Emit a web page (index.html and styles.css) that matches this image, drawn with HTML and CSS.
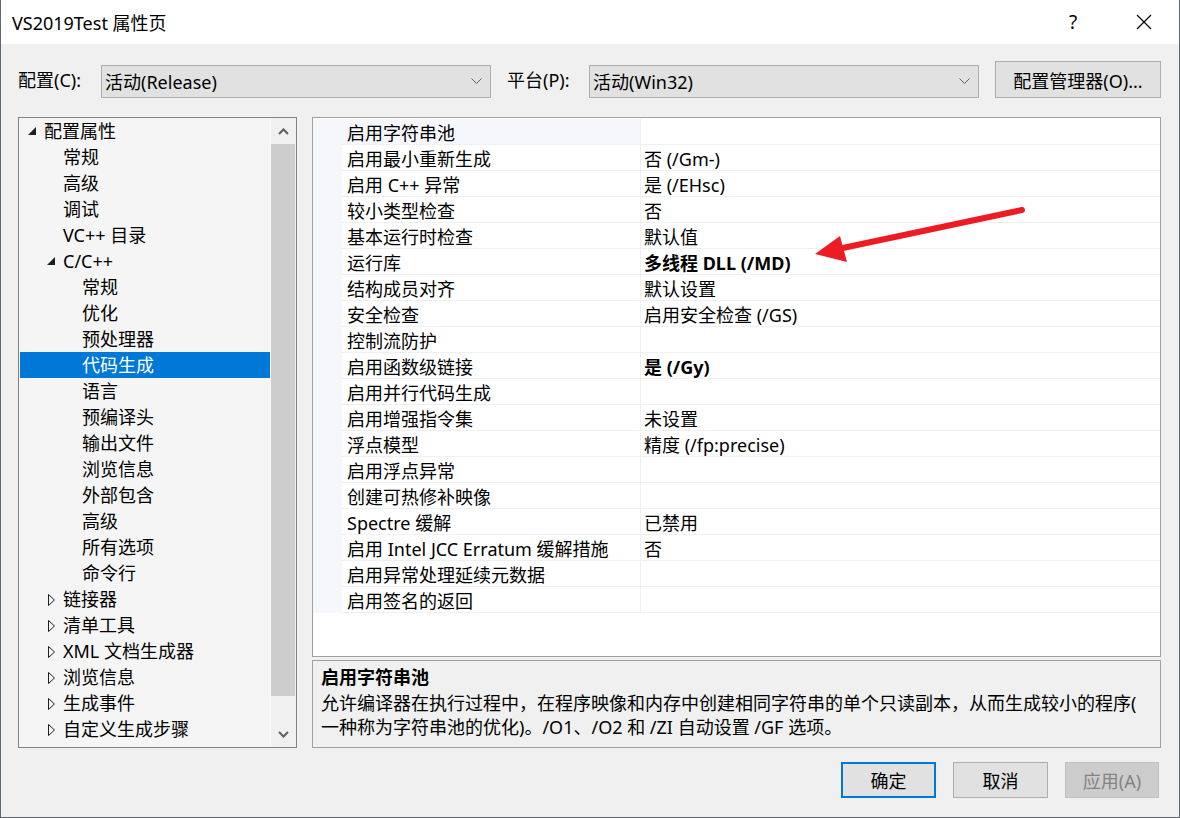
FILE: index.html
```html
<!DOCTYPE html>
<html lang="zh-CN">
<head>
  <meta charset="UTF-8" />
  <title>VS2019Test 属性页</title>
  <link rel="stylesheet" href="styles.css">
</head>
<body>
<div class="window">
  <div class="titlebar">
    <span class="title">VS2019Test 属性页</span>
    <span class="help">?</span>
    <span class="close">
      <svg width="16" height="16" viewBox="0 0 16 16"><path d="M1 1L15 15M15 1L1 15" stroke="#000" stroke-width="1.2"/></svg>
    </span>
  </div>

  <div class="content">
    <div class="config-row">
      <label class="field-label">配置(C):</label>
      <div class="combo">
        <span>活动(Release)</span>
        <svg class="chev" width="11" height="6" viewBox="0 0 11 6"><path d="M0.5 0.5L5.5 5.5L10.5 0.5" fill="none" stroke="#606060"/></svg>
      </div>
      <label class="field-label second">平台(P):</label>
      <div class="combo">
        <span>活动(Win32)</span>
        <svg class="chev" width="11" height="6" viewBox="0 0 11 6"><path d="M0.5 0.5L5.5 5.5L10.5 0.5" fill="none" stroke="#606060"/></svg>
      </div>
      <button class="btn manager">配置管理器(O)...</button>
    </div>

    <div class="main">
      <div class="tree">
        <div class="tree-rows">
          <div class="node lv0"><svg class="exp" width="8" height="8" viewBox="0 0 8 8"><polygon points="8,0 8,8 0,8" fill="#1e1e1e"/></svg>配置属性</div>
          <div class="node lv1">常规</div>
          <div class="node lv1">高级</div>
          <div class="node lv1">调试</div>
          <div class="node lv1">VC++ 目录</div>
          <div class="node lv1"><svg class="exp" width="8" height="8" viewBox="0 0 8 8"><polygon points="8,0 8,8 0,8" fill="#1e1e1e"/></svg>C/C++</div>
          <div class="node lv2">常规</div>
          <div class="node lv2">优化</div>
          <div class="node lv2">预处理器</div>
          <div class="node lv2 selected">代码生成</div>
          <div class="node lv2">语言</div>
          <div class="node lv2">预编译头</div>
          <div class="node lv2">输出文件</div>
          <div class="node lv2">浏览信息</div>
          <div class="node lv2">外部包含</div>
          <div class="node lv2">高级</div>
          <div class="node lv2">所有选项</div>
          <div class="node lv2">命令行</div>
          <div class="node lv1"><svg class="col" width="7" height="12" viewBox="0 0 7 12"><polygon points="0.5,0.5 6.5,6 0.5,11.5" fill="none" stroke="#1e1e1e"/></svg>链接器</div>
          <div class="node lv1"><svg class="col" width="7" height="12" viewBox="0 0 7 12"><polygon points="0.5,0.5 6.5,6 0.5,11.5" fill="none" stroke="#1e1e1e"/></svg>清单工具</div>
          <div class="node lv1"><svg class="col" width="7" height="12" viewBox="0 0 7 12"><polygon points="0.5,0.5 6.5,6 0.5,11.5" fill="none" stroke="#1e1e1e"/></svg>XML 文档生成器</div>
          <div class="node lv1"><svg class="col" width="7" height="12" viewBox="0 0 7 12"><polygon points="0.5,0.5 6.5,6 0.5,11.5" fill="none" stroke="#1e1e1e"/></svg>浏览信息</div>
          <div class="node lv1"><svg class="col" width="7" height="12" viewBox="0 0 7 12"><polygon points="0.5,0.5 6.5,6 0.5,11.5" fill="none" stroke="#1e1e1e"/></svg>生成事件</div>
          <div class="node lv1"><svg class="col" width="7" height="12" viewBox="0 0 7 12"><polygon points="0.5,0.5 6.5,6 0.5,11.5" fill="none" stroke="#1e1e1e"/></svg>自定义生成步骤</div>
        </div>
        <div class="scrollbar">
          <div class="sb-btn">
            <svg width="11" height="7" viewBox="0 0 11 7"><path d="M1 6L5.5 1.5L10 6" fill="none" stroke="#606060" stroke-width="2"/></svg>
          </div>
          <div class="sb-thumb"></div>
          <div class="sb-track"></div>
          <div class="sb-btn">
            <svg width="11" height="7" viewBox="0 0 11 7"><path d="M1 1L5.5 5.5L10 1" fill="none" stroke="#606060" stroke-width="2"/></svg>
          </div>
        </div>
      </div>

      <div class="right">
        <div class="grid">
          <div class="prop active"><span class="name">启用字符串池</span><span class="value"></span></div>
          <div class="prop"><span class="name">启用最小重新生成</span><span class="value">否 (/Gm-)</span></div>
          <div class="prop"><span class="name">启用 C++ 异常</span><span class="value">是 (/EHsc)</span></div>
          <div class="prop"><span class="name">较小类型检查</span><span class="value">否</span></div>
          <div class="prop"><span class="name">基本运行时检查</span><span class="value">默认值</span></div>
          <div class="prop"><span class="name">运行库</span><span class="value bold">多线程 DLL (/MD)</span></div>
          <div class="prop"><span class="name">结构成员对齐</span><span class="value">默认设置</span></div>
          <div class="prop"><span class="name">安全检查</span><span class="value">启用安全检查 (/GS)</span></div>
          <div class="prop"><span class="name">控制流防护</span><span class="value"></span></div>
          <div class="prop"><span class="name">启用函数级链接</span><span class="value bold">是 (/Gy)</span></div>
          <div class="prop"><span class="name">启用并行代码生成</span><span class="value"></span></div>
          <div class="prop"><span class="name">启用增强指令集</span><span class="value">未设置</span></div>
          <div class="prop"><span class="name">浮点模型</span><span class="value">精度 (/fp:precise)</span></div>
          <div class="prop"><span class="name">启用浮点异常</span><span class="value"></span></div>
          <div class="prop"><span class="name">创建可热修补映像</span><span class="value"></span></div>
          <div class="prop"><span class="name">Spectre 缓解</span><span class="value">已禁用</span></div>
          <div class="prop"><span class="name">启用 Intel JCC Erratum 缓解措施</span><span class="value">否</span></div>
          <div class="prop"><span class="name">启用异常处理延续元数据</span><span class="value"></span></div>
          <div class="prop"><span class="name">启用签名的返回</span><span class="value"></span></div>
        </div>
        <div class="desc">
          <div class="desc-title">启用字符串池</div>
          <div class="desc-text">允许编译器在执行过程中，在程序映像和内存中创建相同字符串的单个只读副本，从而生成较小的程序(<br>一种称为字符串池的优化)。/O1、/O2 和 /ZI 自动设置 /GF 选项。</div>
        </div>
      </div>
    </div>

    <div class="footer">
      <button class="btn default">确定</button>
      <button class="btn">取消</button>
      <button class="btn disabled">应用(A)</button>
    </div>
  </div>

  <!-- 标注箭头 -->
  <svg class="arrow" width="1180" height="818" viewBox="0 0 1180 818">
    <line x1="1022" y1="210" x2="838" y2="249" stroke="#ed1c24" stroke-width="6" stroke-linecap="round"/>
    <polygon points="815,254 840,236 847,262" fill="#ed1c24"/>
  </svg>
</div>
</body>
</html>
```

FILE: styles.css
```css
* {
  box-sizing: border-box;
}
body {
  margin: 0;
  font-family: "Noto Sans", "Noto Sans CJK SC", sans-serif;
  font-size: 18px;
  color: #000;
  background: #f0f0f0;
}
.window {
  position: relative;
  width: 1180px;
  height: 818px;
  border: 1px solid #5d6770;
  border-top: none;
  background: #f0f0f0;
  overflow: hidden;
}
.titlebar {
  display: flex;
  align-items: center;
  height: 44px;
  background: #fff;
  padding-left: 11px;
}
.title {
  flex: 1;
  font-size: 18px;
}
.help {
  width: 70px;
  text-align: center;
  font-size: 19px;
  margin-right: 1px;
}
.close {
  width: 70px;
  display: flex;
  justify-content: center;
}
.content {
  padding: 17px 18px 0 17px;
}
.config-row {
  display: flex;
  align-items: center;
  height: 37px;
}
.field-label {
  width: 83px;
  line-height: 26px;
}
.field-label.second {
  width: 82px;
  margin-left: 16px;
}
.combo {
  display: flex;
  align-items: center;
  justify-content: space-between;
  width: 390px;
  height: 33px;
  margin-top: 3px;
  padding: 0 8px 0 3px;
  background: #e1e1e1;
  border: 1px solid #adadad;
}
.btn {
  font-family: inherit;
  font-size: 18px;
  color: #000;
  background: #e1e1e1;
  border: 1px solid #adadad;
  padding: 0;
  height: 36px;
  width: 95px;
}
.btn.manager {
  width: 166px;
  height: 37px;
  margin-left: 16px;
}
.main {
  display: flex;
  margin-top: 19px;
  height: 631px;
}
.tree {
  display: flex;
  width: 279px;
  border: 1px solid #828282;
  background: #f5f5f5;
}
.tree-rows {
  flex: 1;
  padding-left: 1px;
}
.node {
  position: relative;
  height: 26px;
  padding-top: 1px;
  line-height: 25px;
  white-space: nowrap;
}
.node.lv0 { padding-left: 24px; }
.node.lv1 { padding-left: 43px; }
.node.lv2 { padding-left: 62px; }
.node.selected {
  background: #0078d7;
  color: #fff;
}
.node .exp {
  position: absolute;
  top: 9px;
}
.node.lv0 .exp { left: 8px; }
.node.lv1 .exp { left: 27px; }
.node .col {
  position: absolute;
  left: 28px;
  top: 8px;
}
.scrollbar {
  display: flex;
  flex-direction: column;
  width: 26px;
  background: #f0f0f0;
  border-left: 1px solid #fafafa;
}
.sb-btn {
  height: 26px;
  display: flex;
  align-items: center;
  justify-content: center;
}
.sb-thumb {
  height: 552px;
  background: #cdcdcd;
  margin: 0 1px 0 0;
}
.sb-track {
  flex: 1;
}
.right {
  display: flex;
  flex-direction: column;
  width: 849px;
  margin-left: 15px;
}
.grid {
  display: flex;
  flex-direction: column;
  height: 540px;
  background: #fff;
  border: 1px solid #a0a0a0;
  padding-top: 1px;
}
.prop {
  display: flex;
  height: 26px;
  white-space: nowrap;
}
.prop::before {
  content: "";
  width: 29px;
  background: #f5f7fc;
}
.prop .name,
.prop .value {
  padding-top: 3px;
  line-height: 22px;
  border-bottom: 1px solid #f0f0f0;
}
.prop .name {
  width: 299px;
  padding-left: 5px;
  border-right: 1px solid #f0f0f0;
}
.prop .value {
  flex: 1;
  padding-left: 3px;
}
.prop.active .name {
  background: #f5f7fc;
}
.bold {
  font-weight: bold;
}
.desc {
  margin-top: 3px;
  flex: 1;
  border: 1px solid #a0a0a0;
  background: #f0f0f0;
  padding: 4px 8px 0 8px;
  line-height: 24px;
  white-space: nowrap;
}
.desc-title {
  font-weight: bold;
  margin-bottom: 2px;
}
.footer {
  display: flex;
  justify-content: flex-end;
  gap: 17px;
  margin-top: 14px;
  padding-right: 2px;
}
.btn.default {
  border: 2px solid #0078d7;
}
.btn.disabled {
  background: #cccccc;
  border-color: #bfbfbf;
  color: #838383;
  width: 94px;
}
.arrow {
  position: absolute;
  left: -1px;
  top: 0;
  pointer-events: none;
}
```
